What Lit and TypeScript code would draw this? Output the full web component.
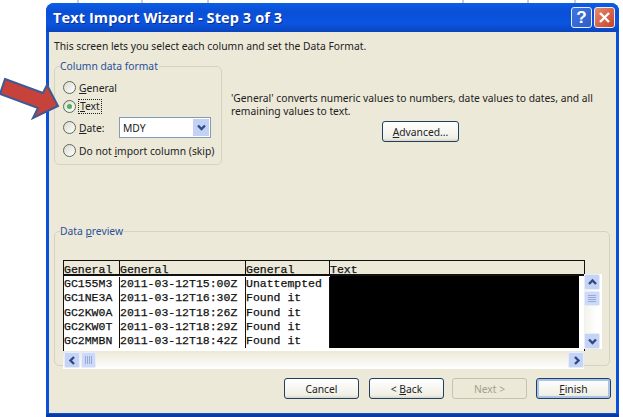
import { LitElement, html, css } from "lit";
import { customElement } from "lit/decorators.js";

const rows = [
  ["GC155M3", "2011-03-12T15:00Z", "Unattempted"],
  ["GC1NE3A", "2011-03-12T16:30Z", "Found it"],
  ["GC2KW0A", "2011-03-12T18:26Z", "Found it"],
  ["GC2KW0T", "2011-03-12T18:29Z", "Found it"],
  ["GC2MMBN", "2011-03-12T18:42Z", "Found it"],
];

const chev = (d: string) => html`<svg width="11" height="11" viewBox="0 0 11 11"><path d=${d} fill="none" stroke="#2f4a8c" stroke-width="2.4"/></svg>`;

@customElement("app-root")
export class AppRoot extends LitElement {
  static styles = css`
    :host { display: block; position: relative; width: 623px; height: 417px; background: #fff; overflow: hidden;
      font-family: "Noto Sans", "Liberation Sans", sans-serif; font-size: 10.3px; color: #222; }
    .arrow { position: absolute; left: 0; top: 70px; }
    .ticks { position: absolute; left: 0; top: 0; }
    .window { position: absolute; left: 46px; top: 3px; width: 573px; height: 414px; box-sizing: border-box;
      display: flex; flex-direction: column; background: #0a50d8; border-radius: 8px 8px 0 0; border-bottom: 3px solid #0a3a9e;
      padding: 0 3px 1px 3px; }
    .title { height: 29px; flex: none; box-sizing: border-box; margin: 0 -3px; padding: 0 3px 0 7px; display: flex; align-items: center;
      justify-content: space-between; border-radius: 8px 8px 0 0;
      background: linear-gradient(#0a5fe6 0, #0a4fd6 30%, #0a55e0 70%, #0a44bd 100%); }
    .title b { color: #fff; font: bold 14.5px "Open Sans", "Liberation Sans", sans-serif; letter-spacing: 0.1px; text-shadow: 1px 1px 0 #0a2f95; }
    .caps { display: flex; gap: 2px; margin-right: 1px; }
    .cap { width: 21px; height: 21px; box-sizing: border-box; border: 1px solid #e8eefc; border-radius: 3px; display: flex; align-items: center; justify-content: center;
      color: #fff; font: bold 17px "Liberation Sans", sans-serif; }
    .help { background: linear-gradient(135deg, #3f74e0, #2e5ec8); }
    .close { background: linear-gradient(135deg, #e88a6c, #c6432a); }
    .client { flex: 1; background: #ece9d8; display: flex; flex-direction: column; padding: 0 6px 0 5px; min-height: 0; }
    .desc { margin: 7px 0 0 0; line-height: 14px; height: 14px; }
    .top { display: flex; margin-top: 6px; height: 165px; }
    fieldset { margin: 0; padding: 0; border: 1px solid #d5d2c3; border-radius: 5px; box-sizing: border-box; }
    legend { color: #2a4f9a; padding: 0 1px 0 0; line-height: 15px; }
    .format { width: 168px; height: 106px; padding: 3px 0 0 8px; display: flex; flex-direction: column; }
    .format legend { margin-left: -3px; }
    .opt { display: flex; align-items: center; gap: 3px; height: 21px; flex: none; }
    .opt.text { margin-top: -2px; }
    .opt.skip { margin-top: 2px; }
    .date-label { width: 37px; flex: none; }
    .radio { width: 13px; height: 13px; flex: none; box-sizing: border-box; border: 1px solid #5a6a60; border-radius: 50%;
      background: linear-gradient(135deg, #dcd9cc, #fff); display: flex; align-items: center; justify-content: center; }
    .radio i { width: 5px; height: 5px; border-radius: 50%; background: #4cb158; }
    .focus { outline: 1px dotted #222; padding: 0 1px; line-height: 13px; }
    u { text-decoration-thickness: 1px; text-underline-offset: 1px; }
    .select { width: 92px; height: 21px; box-sizing: border-box; border: 1px solid #7f9db9; background: #fff;
      display: flex; align-items: center; justify-content: space-between; padding: 1px 1px 1px 3px; }
    .sbtn { width: 16px; height: 17px; background: #c3d2f4; display: flex; align-items: center; justify-content: center; flex: none; }
    .right { margin-left: 9px; padding-top: 33px; width: 375px; display: flex; flex-direction: column; }
    .right p { margin: 0; line-height: 13px; }
    .btn { box-sizing: border-box; height: 21px; border: 1px solid #1f3f63; border-radius: 3px; background: linear-gradient(#fff, #f0efe6 85%, #d9d6c8);
      display: flex; align-items: center; justify-content: center; flex: none; color: #222; }
    .adv { width: 77px; margin: 3px 0 0 151px; }
    .preview { margin-top: 0; width: 556px; height: 142px; padding: 21px 0 0 8px; flex: none; }
    .preview legend { margin-left: -3px; }
    .grid { display: flex; flex-wrap: wrap; width: 540px; }
    .table { width: 522px; height: 91px; font: 11.5px/14px "Liberation Mono", monospace; color: #111; background: #fff; display: flex; flex-direction: column;
      -webkit-text-stroke: 0.25px #111; }
    .hdr { flex: none; background: #ece9d8; border: 1px solid #111; border-bottom: 2px solid #111; display: grid;
      grid-template-columns: 56px 126px 84px 1fr; height: 13px; }
    .hdr span { border-right: 1px solid #111; line-height: 13px; padding-top: 2px; height: 11px; }
    .hdr span:last-child { border-right: 0; }
    .body { flex: 1; display: grid; grid-template-columns: 56px 126px 84px 1fr; grid-auto-rows: 14.25px; padding-top: 1px; border-right: 1px solid #111; border-left: 1px solid #111; box-sizing: border-box; }
    .body span { border-right: 1px solid #111; white-space: nowrap; overflow: hidden; }
    .black { grid-column: 4; grid-row: 1 / 6; background: #000; margin: -1px 5px 0 0; border: 0 !important; }
    .vbar { width: 18px; height: 75px; margin-top: 14px; margin-left: -1px; background: linear-gradient(90deg, #f3f2ea, #fff 70%); display: flex; flex-direction: column; justify-content: space-between; }
    .hbar { width: 521px; height: 18px; background: linear-gradient(#ece9d8, #fff); display: flex; justify-content: space-between; align-items: center; }
    .sb { width: 16px; height: 16px; box-sizing: border-box; border: 1px solid #e5ecfb; background: #c5d3f5; display: flex; align-items: center; justify-content: center; flex: none; border-radius: 2px; }
    .hleft { display: flex; gap: 1px; margin-left: 1px; }
    .thumb { width: 15px; height: 16px; box-sizing: border-box; border: 1px solid #e5ecfb; background: #cdd9f7; border-radius: 2px; display: flex; align-items: center; justify-content: center; }
    .thumb.v { width: 16px; height: 15px; }
    .thumb svg { display: block; }
    .vtop { display: flex; flex-direction: column; gap: 1px; }
    .buttons { display: flex; margin-top: 12px; padding-left: 230px; }
    .buttons .btn { width: 75px; }
    .b1 { margin-right: 10px; }
    .b2 { margin-right: 8px; }
    .b3 { margin-right: 9px; color: #a3a08f !important; border-color: #c5c2b2 !important; background: #ece9d8 !important; }
    .finish { box-shadow: inset 0 0 0 2px #a9c3ea; }
  `;

  render() {
    return html`
      <svg class="ticks" width="623" height="4"><path d="M78 0v3M142 0v3M208 0v3M463 0v3M528 0v3M575 0v3" stroke="#9a9a9a"/></svg>
      <div class="window">
        <div class="title">
          <b>Text Import Wizard - Step 3 of 3</b>
          <div class="caps"><div class="cap help">?</div><div class="cap close">
            <svg width="13" height="13" viewBox="0 0 13 13"><path d="M2 2l9 9M11 2l-9 9" stroke="#fff" stroke-width="2.4"/></svg></div></div>
        </div>
        <div class="client">
          <p class="desc">This screen lets you select each column and set the Data Format.</p>
          <div class="top">
            <fieldset class="format">
              <legend>Column data format</legend>
              <div class="opt"><span class="radio"></span><span><u>G</u>eneral</span></div>
              <div class="opt text"><span class="radio"><i></i></span><span class="focus"><u>T</u>ext</span></div>
              <div class="opt"><span class="radio"></span><span class="date-label"><u>D</u>ate:</span>
                <div class="select"><span>MDY</span><span class="sbtn">${chev("M2 3.5l3.5 3.5 3.5-3.5")}</span></div></div>
              <div class="opt skip"><span class="radio"></span><span>Do not <u>i</u>mport column (skip)</span></div>
            </fieldset>
            <div class="right">
              <p>'General' converts numeric values to numbers, date values to dates, and all<br>remaining values to text.</p>
              <div class="btn adv"><span><u>A</u>dvanced...</span></div>
            </div>
          </div>
          <fieldset class="preview">
            <legend>Data <u>p</u>review</legend>
            <div class="grid">
              <div class="table">
                <div class="hdr"><span>General</span><span>General</span><span>General</span><span>Text</span></div>
                <div class="body">
                  ${rows.map(r => html`<span>${r[0]}</span><span>${r[1]}</span><span>${r[2]}</span>${r === rows[0] ? html`<span class="black"></span>` : ""}`)}
                </div>
              </div>
              <div class="vbar">
                <div class="vtop"><div class="sb">${chev("M2 7l3.5-3.5 3.5 3.5")}</div>
                <div class="thumb v"><svg width="8" height="7" viewBox="0 0 8 7"><path d="M0 .5h8M0 2.5h8M0 4.5h8M0 6.5h8" stroke="#95a9d8"/></svg></div></div>
                <div class="sb">${chev("M2 3.5l3.5 3.5 3.5-3.5")}</div>
              </div>
              <div class="hbar">
                <div class="hleft"><div class="sb">${chev("M7 2L3.5 5.5 7 9")}</div>
                <div class="thumb"><svg width="7" height="8" viewBox="0 0 7 8"><path d="M.5 0v8M2.5 0v8M4.5 0v8M6.5 0v8" stroke="#95a9d8"/></svg></div></div>
                <div class="sb">${chev("M4 2l3.5 3.5L4 9")}</div>
              </div>
            </div>
          </fieldset>
          <div class="buttons">
            <div class="btn b1"><span>Cancel</span></div>
            <div class="btn b2"><span>&lt; <u>B</u>ack</span></div>
            <div class="btn b3"><span>Next &gt;</span></div>
            <div class="btn finish"><span><u>F</u>inish</span></div>
          </div>
        </div>
      </div>
      <svg class="arrow" width="60" height="50" viewBox="0 70 60 50">
        <polygon points="5,79 43,93 47,85 58,106 33,118 38,108 0,94" fill="#c8423c" stroke="#3d5a94" stroke-width="2"/>
      </svg>
    `;
  }
}
